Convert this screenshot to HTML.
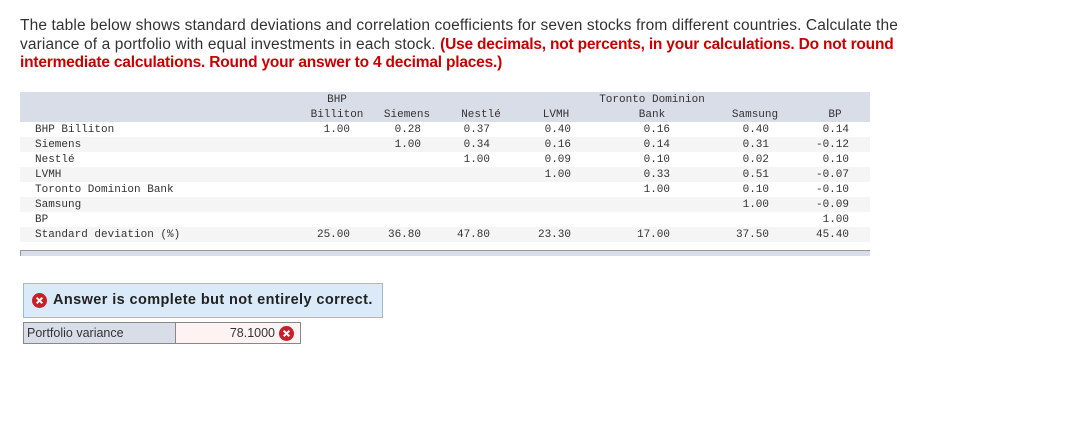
<!DOCTYPE html>
<html><head><style>
body{margin:0;width:1075px;height:435px;background:#fff;position:relative;font-family:"Liberation Sans",sans-serif;overflow:hidden}
.q{position:absolute;left:20px;top:17px;width:905px;font-size:15.5px;letter-spacing:0.12px;line-height:18.5px;color:#333}
.q b{color:#c00;letter-spacing:-0.2px}
.m{position:absolute;font-family:"Liberation Mono",monospace;font-size:11px;color:#333;line-height:15px;white-space:pre}
.band{position:absolute;left:20px;width:850px;height:15px}
.c{text-align:center;width:100px}
.r{text-align:right;width:60px}
</style></head><body>
<div class="q">The table below shows standard deviations and correlation coefficients for seven stocks from different countries. Calculate the variance of a portfolio with equal investments in each stock. <b>(Use decimals, not percents, in your calculations. Do not round intermediate calculations. Round your answer to 4 decimal places.)</b></div>
<div class="band" style="top:92px;height:30px;background:#d9dde8"></div>
<div class="band" style="top:137px;background:#f5f5f5"></div>
<div class="band" style="top:167px;background:#f5f5f5"></div>
<div class="band" style="top:197px;background:#f5f5f5"></div>
<div class="band" style="top:227px;background:#f5f5f5"></div>
<div style="position:absolute;left:20px;top:250px;width:850px;height:5px;background:#d9dde8;border-top:1px solid #999"></div>
<div style="position:absolute;left:20px;top:250px;width:1px;height:6px;background:#999"></div>
<div class="m c" style="left:287px;top:93px">BHP</div>
<div class="m c" style="left:287px;top:108px">Billiton</div>
<div class="m c" style="left:357px;top:108px">Siemens</div>
<div class="m c" style="left:431px;top:108px">Nestlé</div>
<div class="m c" style="left:506px;top:108px">LVMH</div>
<div class="m c" style="left:572px;top:93px;width:160px">Toronto Dominion</div>
<div class="m c" style="left:602px;top:108px">Bank</div>
<div class="m c" style="left:705px;top:108px">Samsung</div>
<div class="m c" style="left:785px;top:108px">BP</div>
<div class="m" style="left:35px;top:123px">BHP Billiton
Siemens
Nestlé
LVMH
Toronto Dominion Bank
Samsung
BP
Standard deviation (%)</div>
<div class="m r" style="left:290px;top:123px">1.00






25.00</div>
<div class="m r" style="left:361px;top:123px">0.28
1.00





36.80</div>
<div class="m r" style="left:430px;top:123px">0.37
0.34
1.00




47.80</div>
<div class="m r" style="left:511px;top:123px">0.40
0.16
0.09
1.00



23.30</div>
<div class="m r" style="left:610px;top:123px">0.16
0.14
0.10
0.33
1.00


17.00</div>
<div class="m r" style="left:709px;top:123px">0.40
0.31
0.02
0.51
0.10
1.00

37.50</div>
<div class="m r" style="left:789px;top:123px">0.14
-0.12
0.10
-0.07
-0.10
-0.09
1.00
45.40</div>
<div style="position:absolute;left:23px;top:283px;width:358px;height:33px;background:#daeaf8;border:1px solid #9bbbdd"></div>
<svg style="position:absolute;left:32px;top:293px" width="15" height="15" viewBox="0 0 16 16"><circle cx="8" cy="8" r="8" fill="#c8202a"/><path d="M5 5L11 11M11 5L5 11" stroke="#fff" stroke-width="2.2"/></svg>
<div style="position:absolute;left:53px;top:292px;font-size:14.5px;letter-spacing:0.4px;font-weight:bold;color:#222">Answer is complete but not entirely correct.</div>
<div style="position:absolute;left:23px;top:322px;width:153px;height:22px;background:#d9dde8;border:1px solid #888;box-sizing:border-box"></div>
<div style="position:absolute;left:175px;top:322px;width:126px;height:22px;background:#fdf3f2;border:1px solid #888;box-sizing:border-box"></div>
<div style="position:absolute;left:27px;top:326px;font-size:12.5px;color:#333">Portfolio variance</div>
<div style="position:absolute;left:200px;top:326px;width:75px;text-align:right;font-size:12.5px;color:#333">78.1000</div>
<svg style="position:absolute;left:279px;top:326px" width="15" height="15" viewBox="0 0 16 16"><circle cx="8" cy="8" r="8" fill="#c8202a"/><path d="M5 5L11 11M11 5L5 11" stroke="#fff" stroke-width="2.2"/></svg>
</body></html>
